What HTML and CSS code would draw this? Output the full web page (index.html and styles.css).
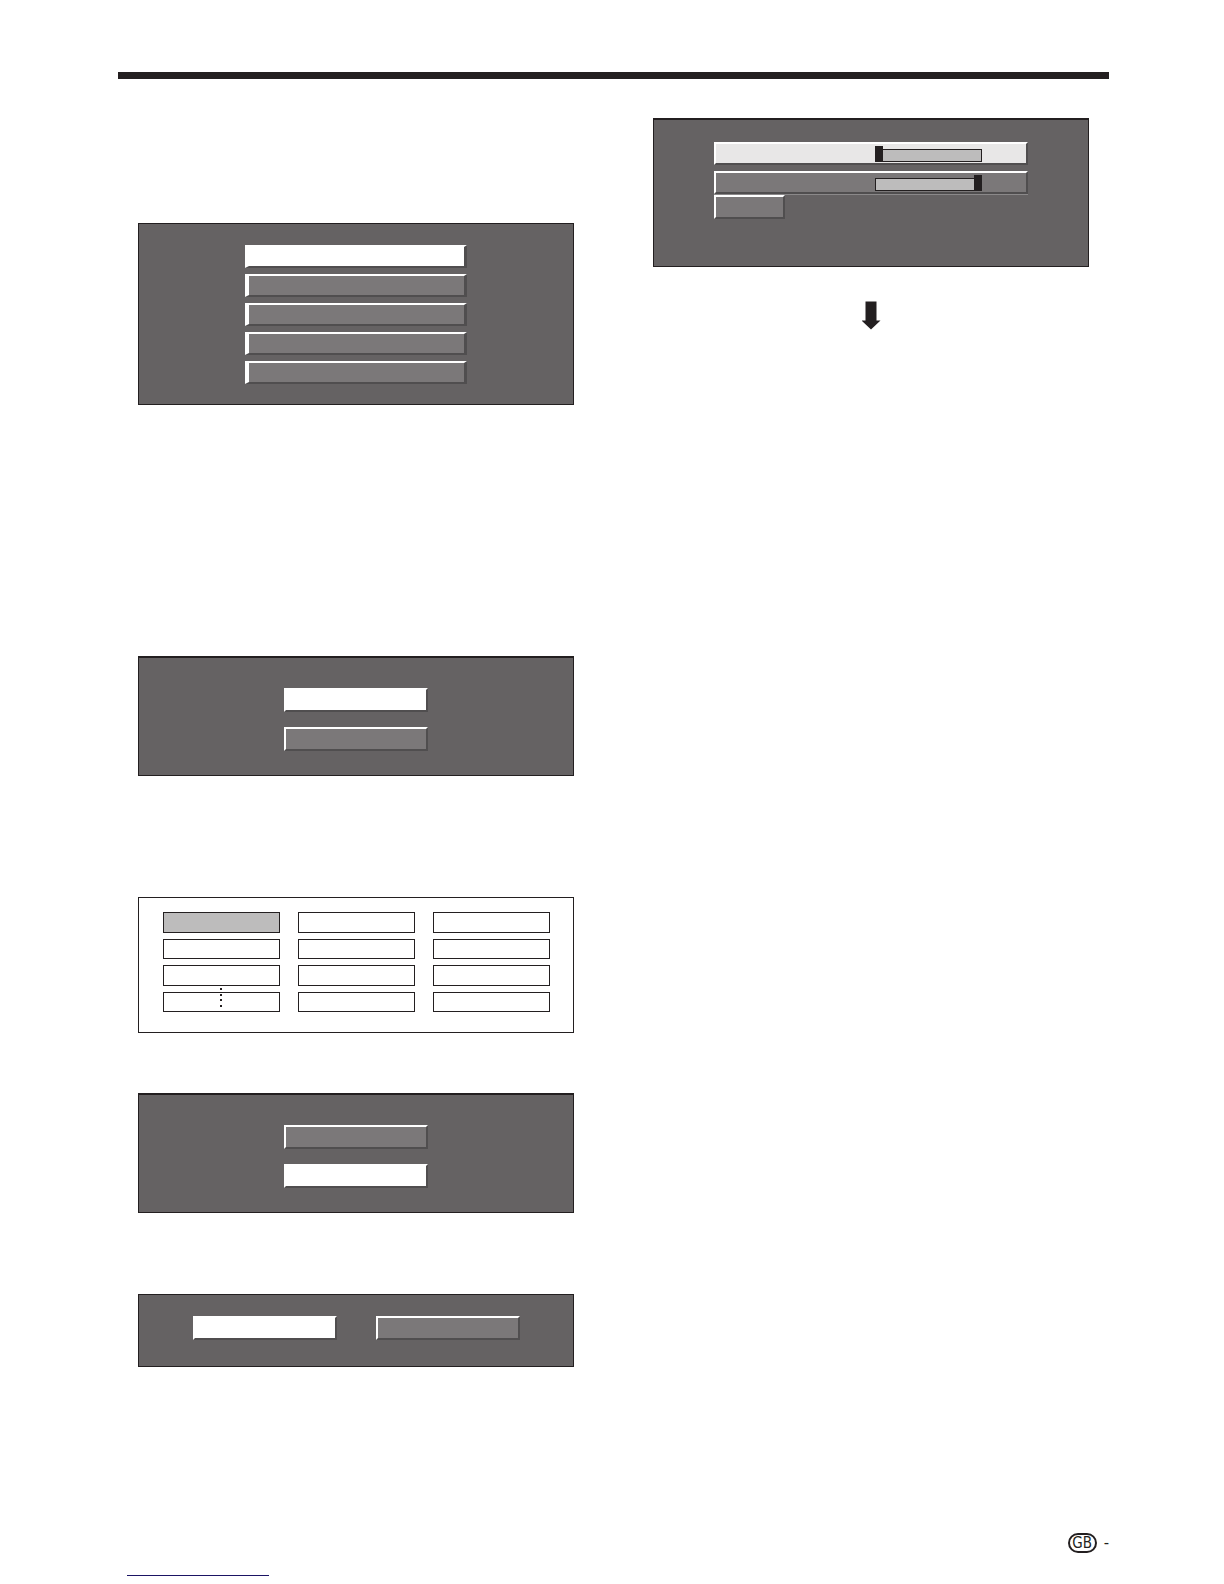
FILE: index.html
```
<!DOCTYPE html>
<html lang="en">
    <head>
        <title>On-screen menus</title>
        <meta charset="UTF-8">
        <meta name="viewport" content="width=device-width, initial-scale=1">
        <link rel="stylesheet" href="styles.css">
    </head>
    <body>

        <header class="rule"></header>

        <main class="columns">
            <div class="column">
                <section class="panel menu">
                    <button class="key active" aria-label="Item 1"></button>
                    <button class="key" aria-label="Item 2"></button>
                    <button class="key" aria-label="Item 3"></button>
                    <button class="key" aria-label="Item 4"></button>
                    <button class="key" aria-label="Item 5"></button>
                </section>

                <section class="panel choice first">
                    <button class="key active" aria-label="Option 1"></button>
                    <button class="key" aria-label="Option 2"></button>
                </section>

                <section class="channels">
                    <div class="cell selected"></div>
                    <div class="cell"></div>
                    <div class="cell"></div>
                    <div class="cell"></div>
                    <div class="cell"></div>
                    <div class="cell"></div>
                    <div class="cell"></div>
                    <div class="cell"></div>
                    <div class="cell"></div>
                    <div class="cell more">
                        <svg class="dots" width="2" height="19" viewBox="0 0 2 19" fill="#231f20">
                            <path d="M0 0h2v2H0zM0 6h2v2H0zM0 11h2v2H0zM0 17h2v2H0z"/>
                        </svg>
                    </div>
                    <div class="cell"></div>
                    <div class="cell"></div>
                </section>

                <section class="panel choice second">
                    <button class="key" aria-label="Option 1"></button>
                    <button class="key active" aria-label="Option 2"></button>
                </section>

                <section class="panel confirm">
                    <button class="key active" aria-label="Yes"></button>
                    <button class="key" aria-label="No"></button>
                </section>
            </div>

            <div class="column">
                <section class="panel levels">
                    <div class="settings">
                        <label class="setting active"><input type="range" min="0" max="100" value="0" aria-label="Minimum"></label>
                        <label class="setting"><input type="range" min="0" max="100" value="100" aria-label="Maximum"></label>
                    </div>
                    <button class="key small" aria-label="Set"></button>
                </section>
                <svg class="arrow" width="19" height="29" viewBox="0 0 19 29" fill="#231f20">
                    <path d="M3.500 0.500h11v19h4L9 28.500 -0.500 19.500h4z"/>
                </svg>
            </div>
        </main>

        <footer>
            <div class="folio"><span class="region">GB</span><span>-</span></div>
            <a class="link" href="#" aria-label="Top of page"></a>
        </footer>

    </body>
</html>
```
FILE: styles.css
```
* {
    box-sizing: border-box;
}
body {
    margin: 0;
    padding: 72px 115px 0 118px;
    font-family: "Liberation Sans", Arial, sans-serif;
    color: #231f20;
    background: white;
}
.rule {
    height: 7px;
    background: #231f20;
}
.columns {
    display: grid;
    grid-template-columns: 1fr 1fr;
    gap: 79px;
    padding: 39px 20px 0;
}
.column {
    display: flex;
    flex-direction: column;
}

.panel {
    display: flex;
    flex-direction: column;
    align-items: center;
    border: 1px solid #231f20;
    background: #656263;
}
    .panel.menu {
        margin-top: 105px;
        padding: 21px 0 20px;
        gap: 6px;
    }
    .panel.choice {
        padding: 30px 0 24px;
        gap: 15px;
        border-top-width: 2px;
    }
    .panel.first {margin-top: 251px;}
    .panel.second {margin-top: 60px;}
    .panel.confirm {
        flex-direction: row;
        justify-content: center;
        margin-top: 81px;
        padding: 21px 0 26px;
        gap: 39px;
    }
    .panel.levels {
        align-items: stretch;
        padding: 22px 60px 47px;
        border-top-width: 2px;
    }

/* raised keys, lit from the top left */
.key, .setting {
    margin: 0;
    padding: 0;
    border: 2px solid #504e4f;
    border-top-color: white;
    border-left-color: white;
    border-radius: 0;
    background: #7b7879;
}
.key {
    width: 144px;
    height: 24px;
}
    .key.active {background: white;}
    .key.small {width: 71px;}
    .menu .key {
        width: 222px;
        height: 23px;
        border-left-width: 4px;
        border-right-width: 3px;
    }

.channels {
    display: grid;
    grid-template-columns: repeat(3, 1fr);
    grid-template-rows: repeat(4, 1fr);
    gap: 6px 18px;
    height: 136px;
    margin-top: 121px;
    padding: 14px 23px 20px 24px;
    border: 1px solid #231f20;
}
    .cell {border: 1px solid #231f20;}
    .cell.selected {background: #bdbcbc;}
    .cell.more {position: relative;}
    /* continuation dots run over the top edge of the cell */
    .dots {
        position: absolute;
        left: 49%;
        top: -5px;
    }

.settings {
    display: flex;
    flex-direction: column;
    gap: 6px;
    border-bottom: 1px solid #8b898a;
}
.setting {
    display: flex;
    justify-content: flex-end;
    align-items: flex-end;
    height: 23px;
    padding: 0 44px 1px 0;
}
    .setting.active {background: #e8e7e7;}
    .setting input {
        -webkit-appearance: none;
        appearance: none;
        width: 107px;
        height: 13px;
        margin: 0;
        background: #bdbcbc;
        box-shadow: inset 0 0 0 1px #231f20;
    }
    .setting input::-webkit-slider-runnable-track {
        height: 13px;
    }
    .setting input::-webkit-slider-thumb {
        -webkit-appearance: none;
        width: 8px;
        height: 16px;
        margin-top: -3px;
        border-radius: 0;
        background: #231f20;
    }

.arrow {
    align-self: center;
    margin-top: 34px;
}

footer {
    margin-top: 166px;
}
.folio {
    display: flex;
    justify-content: flex-end;
    align-items: center;
    gap: 7px;
    height: 20px;
    font-size: 16px;
}
    .region {
        width: 29px;
        height: 20px;
        border: 2px solid #231f20;
        border-radius: 10px;
        font-family: "DejaVu Sans Condensed", "Liberation Sans", sans-serif;
        font-size: 15px;
        line-height: 16px;
        text-align: center;
    }
.link {
    display: block;
    width: 142px;
    height: 23px;
    margin-left: 9px;
    border-bottom: 1px solid #1b1464;
}
```
